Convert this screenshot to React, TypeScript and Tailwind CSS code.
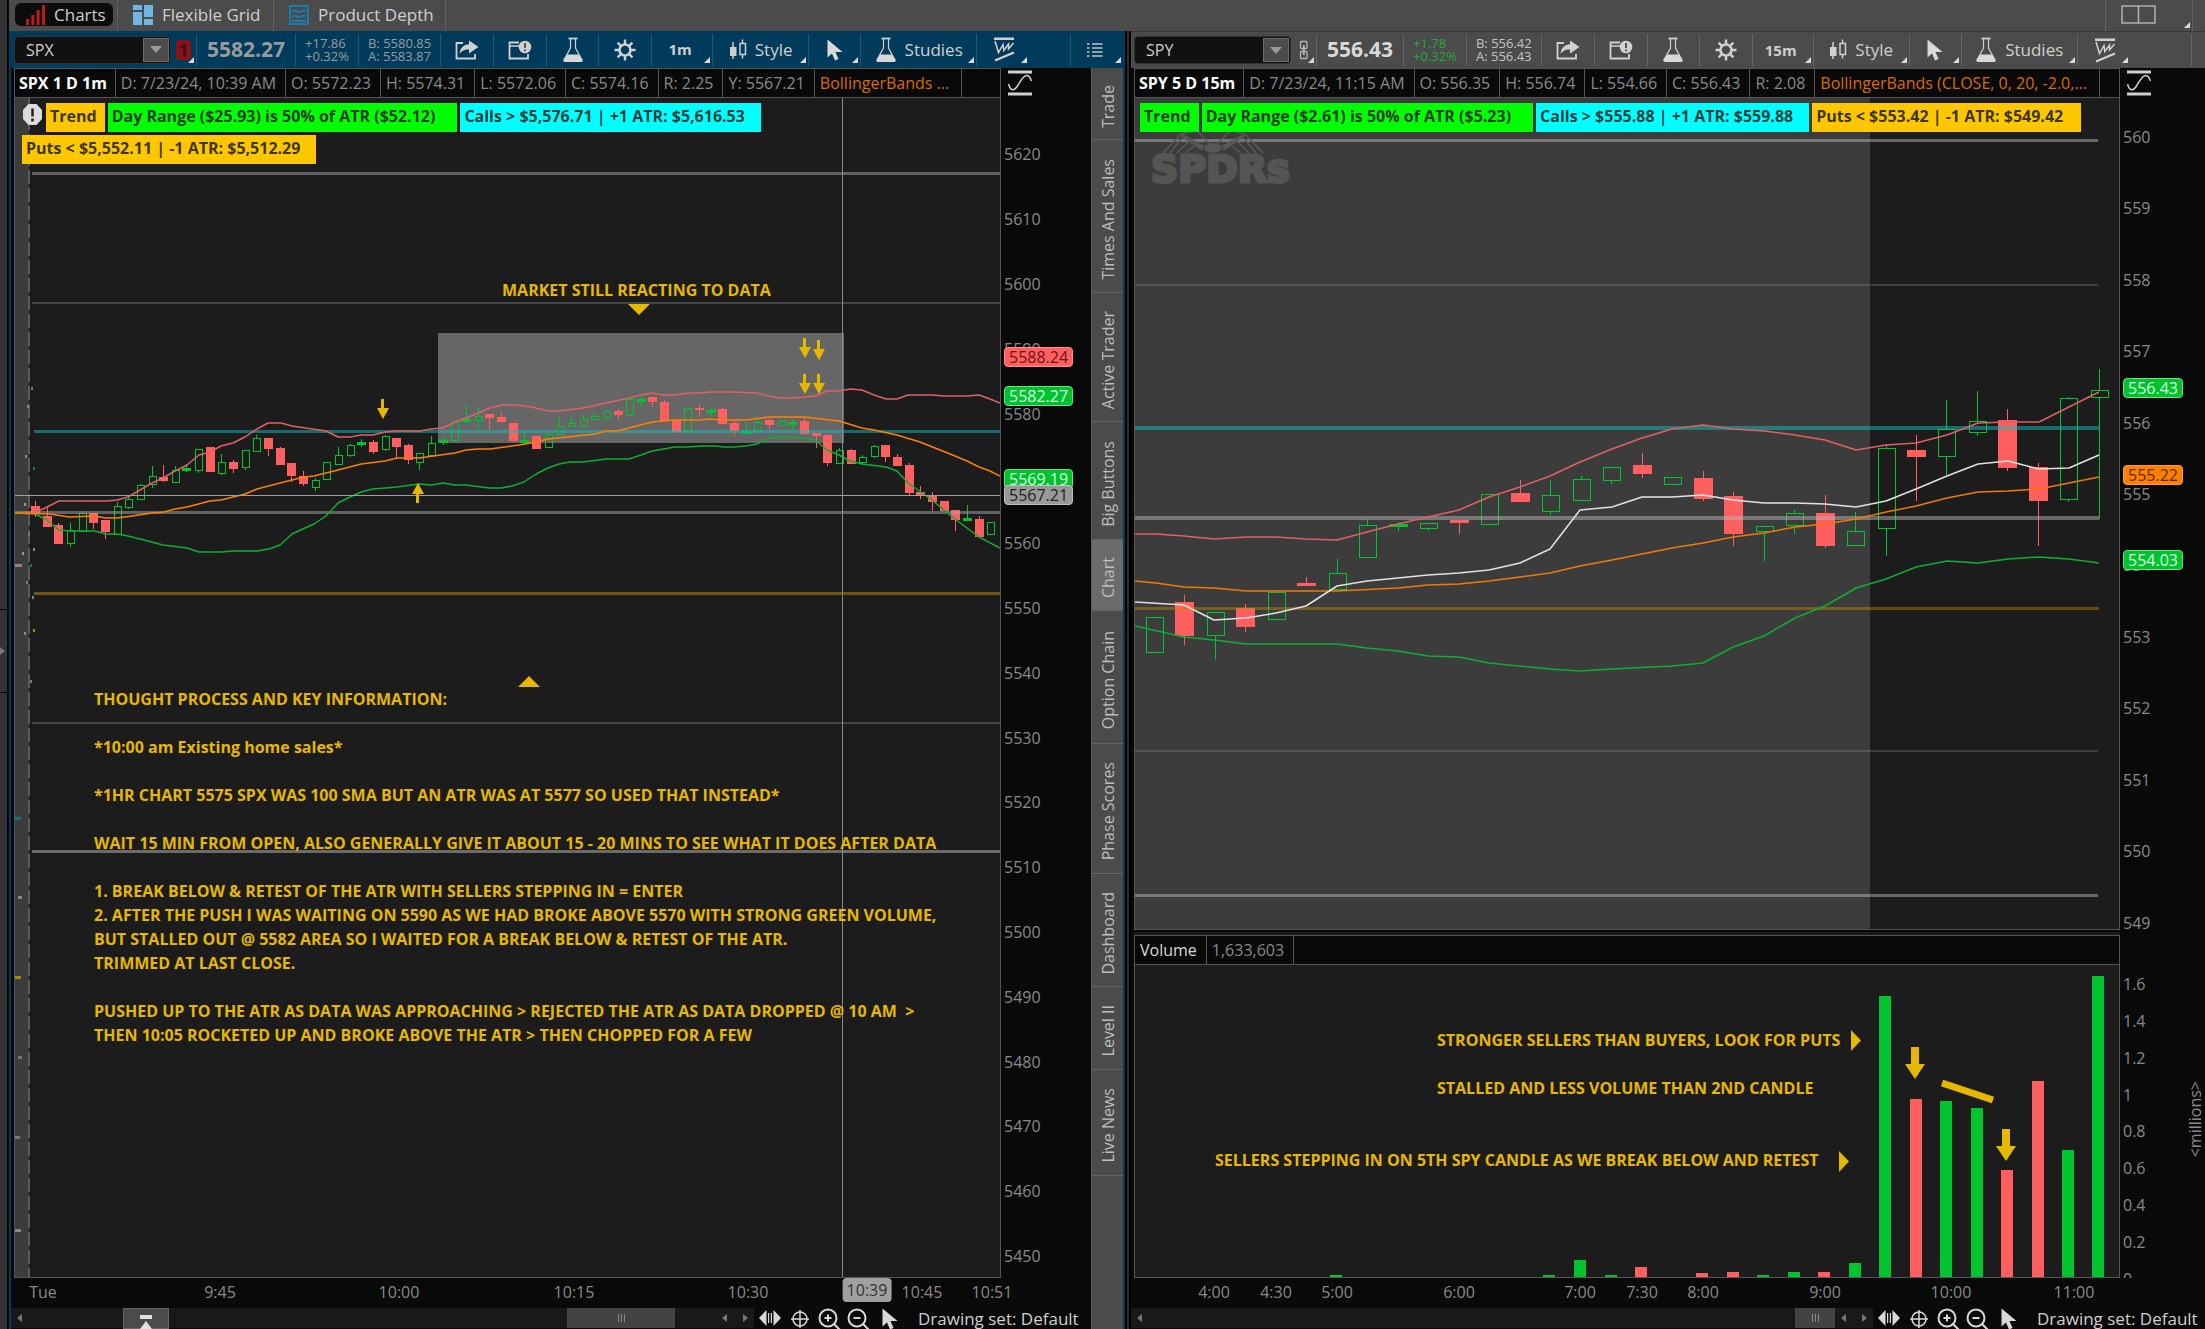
import React from 'react';

type Candle = [kind: 'u' | 'd', high: number, top: number, bottom: number, low: number];
type Point = [x: number, y: number];

const GREEN = '#00c52e';
const RED = '#ff5f5f';
const ORANGE = '#ff8000';
const GOLD = '#e6b800';

/* ---------- data: SPX 1 minute ---------- */

const spxCandles: Candle[] = [
  ['d', 501, 506, 513, 517], ['d', 507, 516, 527, 527], ['d', 523, 525, 544, 544], ['u', 523, 530, 543, 547],
  ['u', 511, 513, 531, 531], ['d', 513, 513, 523, 529], ['d', 520, 520, 532, 539], ['u', 502, 506, 534, 534],
  ['u', 497, 499, 507, 509], ['u', 484, 485, 499, 500], ['u', 466, 476, 484, 488], ['d', 465, 477, 481, 482],
  ['u', 466, 470, 482, 482], ['u', 464, 468, 470, 472], ['u', 449, 449, 470, 473], ['d', 447, 447, 472, 472],
  ['u', 454, 462, 473, 475], ['d', 460, 462, 469, 473], ['u', 450, 450, 467, 470], ['u', 435, 438, 451, 452],
  ['d', 438, 438, 449, 456], ['d', 447, 448, 465, 465], ['d', 463, 463, 476, 482], ['d', 471, 476, 484, 486],
  ['u', 478, 480, 487, 491], ['u', 462, 462, 479, 479], ['u', 447, 455, 464, 464], ['u', 444, 445, 455, 457],
  ['u', 439, 442, 444, 447], ['d', 440, 442, 452, 454], ['u', 435, 436, 449, 451], ['d', 438, 438, 447, 458],
  ['d', 444, 445, 460, 464], ['u', 453, 453, 462, 470], ['u', 436, 443, 455, 456], ['u', 437, 440, 442, 445],
  ['u', 421, 422, 440, 441], ['u', 404, 419, 421, 421], ['u', 408, 416, 420, 429], ['d', 414, 414, 418, 430],
  ['d', 412, 417, 422, 422], ['d', 423, 423, 441, 442], ['u', 432, 440, 442, 444], ['d', 436, 436, 449, 449],
  ['u', 432, 434, 447, 447], ['u', 417, 426, 434, 434], ['u', 415, 423, 426, 426], ['u', 414, 419, 426, 426],
  ['u', 412, 416, 419, 421], ['u', 410, 411, 417, 421], ['d', 409, 411, 415, 419], ['u', 398, 399, 415, 415],
  ['u', 396, 399, 401, 406], ['d', 397, 397, 402, 407], ['d', 400, 402, 421, 421], ['d', 419, 421, 432, 433],
  ['u', 407, 408, 431, 434], ['d', 405, 408, 410, 417], ['u', 408, 410, 412, 417], ['d', 408, 409, 424, 425],
  ['d', 421, 423, 431, 436], ['u', 422, 431, 433, 433], ['u', 415, 422, 431, 432], ['d', 419, 420, 425, 429],
  ['u', 420, 421, 425, 427], ['u', 420, 422, 424, 430], ['d', 418, 421, 434, 434], ['d', 433, 433, 436, 448],
  ['d', 434, 435, 463, 466], ['u', 448, 450, 463, 464], ['d', 449, 450, 464, 464], ['u', 455, 457, 462, 465],
  ['u', 445, 446, 456, 458], ['d', 445, 445, 457, 462], ['d', 454, 457, 466, 466], ['d', 463, 465, 493, 496],
  ['d', 486, 492, 496, 499], ['d', 492, 495, 502, 511], ['d', 501, 501, 511, 511], ['d', 510, 510, 520, 531],
  ['u', 505, 518, 520, 520], ['d', 516, 519, 537, 537], ['u', 522, 522, 534, 534],
];

const spxUpper: Point[] = [
  [15, 513], [35, 512], [43, 509], [59, 501], [107, 501], [117, 500], [128, 497], [140, 490], [152, 483], [163, 478],
  [175, 471], [187, 465], [199, 455], [210, 452], [221, 446], [233, 443], [245, 437], [257, 429], [268, 423], [281, 423],
  [292, 426], [326, 431], [338, 437], [350, 437], [361, 435], [373, 435], [385, 432], [397, 431], [420, 431], [431, 429],
  [443, 428], [455, 422], [466, 418], [478, 413], [490, 408], [502, 405], [516, 405], [525, 406], [536, 408], [548, 411],
  [559, 411], [583, 408], [606, 403], [629, 398], [641, 395], [652, 393], [663, 395], [675, 395], [689, 393], [699, 393],
  [710, 392], [734, 392], [757, 393], [769, 396], [780, 398], [792, 398], [804, 397], [815, 396], [827, 391], [839, 391],
  [850, 389], [862, 390], [874, 395], [886, 399], [897, 399], [908, 395], [932, 395], [944, 396], [967, 396], [979, 395],
  [990, 399], [1000, 403],
];
const spxMiddle: Point[] = [
  [15, 513], [50, 514], [69, 517], [94, 516], [106, 518], [117, 518], [132, 516], [152, 513], [164, 512], [175, 509],
  [187, 507], [210, 501], [221, 500], [245, 494], [257, 489], [280, 483], [304, 477], [314, 476], [338, 470], [361, 464],
  [385, 461], [397, 458], [419, 458], [455, 453], [466, 450], [478, 449], [490, 449], [519, 445], [536, 442], [548, 439],
  [595, 434], [606, 431], [617, 431], [629, 428], [652, 422], [675, 420], [699, 420], [710, 419], [722, 420], [746, 420],
  [769, 417], [804, 417], [839, 421], [862, 428], [874, 430], [897, 435], [920, 442], [955, 456], [967, 461], [979, 467],
  [990, 471], [1000, 476],
];
const spxLower: Point[] = [
  [15, 513], [35, 514], [47, 520], [59, 530], [70, 531], [95, 531], [106, 534], [117, 534], [128, 536], [140, 539],
  [163, 545], [187, 548], [199, 552], [221, 552], [233, 551], [257, 551], [269, 549], [280, 545], [292, 534], [314, 524],
  [326, 516], [338, 503], [350, 497], [361, 492], [373, 489], [397, 487], [419, 484], [431, 485], [443, 483], [455, 485],
  [466, 485], [489, 488], [501, 488], [512, 486], [524, 482], [536, 474], [548, 468], [559, 464], [570, 462], [583, 462],
  [606, 459], [629, 459], [641, 455], [652, 451], [675, 447], [687, 447], [703, 446], [715, 446], [724, 447], [734, 447],
  [746, 446], [757, 444], [769, 438], [780, 437], [792, 437], [804, 438], [815, 440], [827, 450], [839, 455], [850, 461],
  [862, 464], [886, 467], [897, 471], [908, 483], [932, 500], [955, 519], [979, 537], [1000, 548],
];

/* ---------- data: SPY 15 minute ---------- */

const spyCandles: Candle[] = [
  ['u', 617, 617, 652, 652], ['d', 595, 602, 636, 645], ['u', 612, 612, 635, 659], ['d', 604, 608, 627, 632],
  ['u', 590, 592, 619, 619], ['d', 577, 583, 586, 586], ['u', 559, 573, 589, 589], ['u', 519, 525, 557, 557],
  ['u', 522, 524, 526, 531], ['u', 523, 523, 528, 531], ['d', 520, 520, 523, 534], ['u', 494, 494, 524, 524],
  ['d', 480, 493, 502, 502], ['u', 480, 495, 511, 515], ['u', 476, 479, 500, 500], ['u', 467, 467, 480, 484],
  ['d', 453, 465, 474, 478], ['u', 477, 477, 484, 484], ['d', 471, 478, 499, 501], ['d', 492, 496, 534, 546],
  ['u', 526, 526, 531, 561], ['u', 510, 513, 525, 534], ['d', 495, 513, 546, 548], ['u', 512, 531, 545, 545],
  ['u', 445, 448, 528, 556], ['d', 435, 450, 457, 501], ['u', 400, 429, 456, 475], ['u', 391, 421, 432, 436],
  ['d', 409, 420, 468, 471], ['d', 463, 467, 501, 546], ['u', 397, 398, 499, 502], ['u', 369, 390, 397, 519],
];

const spyUpper: Point[] = [
  [1135, 534], [1156, 534], [1184, 536], [1214, 539], [1246, 537], [1276, 537], [1306, 539], [1337, 540], [1367, 532],
  [1398, 524], [1428, 517], [1459, 510], [1489, 497], [1520, 487], [1550, 476], [1580, 462], [1612, 449], [1642, 438],
  [1672, 429], [1703, 425], [1733, 429], [1764, 431], [1795, 435], [1825, 440], [1856, 450], [1886, 445], [1916, 443],
  [1947, 435], [1978, 423], [2008, 422], [2039, 422], [2069, 407], [2099, 392],
];
const spyMiddle: Point[] = [
  [1135, 581], [1156, 583], [1184, 587], [1214, 588], [1246, 591], [1337, 591], [1398, 588], [1428, 585], [1459, 584],
  [1489, 581], [1520, 577], [1550, 573], [1580, 566], [1612, 560], [1642, 554], [1672, 548], [1703, 543], [1733, 537],
  [1764, 533], [1795, 527], [1825, 524], [1856, 519], [1886, 512], [1916, 506], [1947, 498], [1978, 492], [2008, 491],
  [2039, 489], [2069, 483], [2099, 477],
];
const spyAverage: Point[] = [
  [1135, 602], [1184, 605], [1214, 620], [1246, 618], [1276, 613], [1306, 606], [1337, 586], [1367, 581], [1398, 578],
  [1428, 575], [1459, 573], [1489, 570], [1520, 563], [1550, 549], [1580, 510], [1612, 507], [1642, 497], [1672, 497],
  [1703, 495], [1733, 500], [1764, 503], [1795, 503], [1825, 504], [1856, 507], [1886, 501], [1916, 489], [1947, 476],
  [1978, 464], [2008, 461], [2039, 469], [2069, 468], [2099, 455],
];
const spyLower: Point[] = [
  [1135, 626], [1184, 637], [1214, 640], [1246, 644], [1337, 644], [1367, 648], [1398, 651], [1428, 656], [1459, 657],
  [1489, 663], [1550, 669], [1580, 671], [1612, 669], [1672, 666], [1703, 663], [1733, 647], [1764, 636], [1795, 618],
  [1825, 606], [1856, 588], [1886, 579], [1916, 567], [1947, 561], [1978, 563], [2008, 559], [2039, 557], [2069, 559],
  [2099, 563],
];

const volumeBars: [x: number, top: number, kind: 'u' | 'd'][] = [
  [1336, 1275, 'u'], [1549, 1275, 'u'], [1580, 1260, 'u'], [1611, 1275, 'u'], [1641, 1267, 'd'], [1702, 1273, 'd'],
  [1733, 1272, 'd'], [1763, 1275, 'u'], [1794, 1272, 'u'], [1824, 1272, 'd'], [1855, 1263, 'u'], [1885, 996, 'u'],
  [1916, 1099, 'd'], [1946, 1101, 'u'], [1977, 1108, 'u'], [2007, 1170, 'd'], [2038, 1081, 'd'], [2068, 1150, 'u'],
  [2098, 976, 'u'],
];

/* ---------- chart primitives ---------- */

function Candles({ data, x0, step, width }: { data: Candle[]; x0: number; step: number; width: number }) {
  return (
    <g shapeRendering="crispEdges">
      {data.map(([kind, high, top, bottom, low], i) => {
        const x = Math.round(x0 + i * step);
        const left = x - width / 2;
        if (kind === 'd') {
          return (
            <g key={i} fill={RED}>
              <rect x={x} y={high} width={1} height={low - high} />
              <rect x={left} y={top} width={width + 1} height={bottom - top} />
            </g>
          );
        }
        const thin = bottom - top <= 2;
        return (
          <g key={i} fill={GREEN}>
            <rect x={x} y={high} width={1} height={Math.max(0, top - high)} />
            <rect x={x} y={bottom} width={1} height={Math.max(0, low - bottom)} />
            {thin ? (
              <rect x={left} y={top} width={width + 1} height={3} />
            ) : (
              <rect x={left + 1} y={top} width={width - 1} height={bottom - top} fill="none" stroke={GREEN} />
            )}
          </g>
        );
      })}
    </g>
  );
}

function Line({ points, color }: { points: Point[]; color: string }) {
  return (
    <polyline
      points={points.map((p) => p.join(',')).join(' ')}
      fill="none"
      stroke={color}
      strokeWidth={1.5}
      strokeLinejoin="round"
    />
  );
}

function Level({ x1, x2, y, h, color }: { x1: number; x2: number; y: number; h: number; color: string }) {
  return <rect x={x1} y={y} width={x2 - x1} height={h} fill={color} shapeRendering="crispEdges" />;
}

function ArrowMark({ x, y, up, big }: { x: number; y: number; up?: boolean; big?: boolean }) {
  const d = big ? 'M-4 0h8v17h6L0 32-10 17h6z' : 'M-2 0h3v9h5L0 20-6 9h4z';
  return <path d={d} transform={`translate(${x} ${y})${up ? ' scale(1 -1)' : ''}`} fill={GOLD} />;
}

/* ---------- icons ---------- */

const ShareIcon = () => (
  <svg width="24" height="20" viewBox="0 0 24 20" fill="none">
    <path d="M8 3H1.5v15.500H20V14" stroke="#d0d0d0" strokeWidth="1.800" />
    <path d="M14 0.500 23.500 7 14 13.500V9.500C9.500 9 7 10.500 4.500 14 5 8 8.500 4.500 14 4.200z" fill="#d0d0d0" />
  </svg>
);
const AlertWindowIcon = () => (
  <svg width="24" height="20" viewBox="0 0 24 20" fill="none">
    <path d="M11 2.500H1.500v16H20V14" stroke="#d0d0d0" strokeWidth="1.800" />
    <path d="M2 6h9" stroke="#d0d0d0" strokeWidth="1.500" />
    <circle cx="17" cy="7" r="6.300" fill="#d0d0d0" />
    <path d="M17 3v5M17 9.500v1.800" stroke="#3d4d57" strokeWidth="1.800" />
  </svg>
);
const FlaskIcon = () => (
  <svg width="22" height="26" viewBox="0 0 22 26" fill="none">
    <path d="M6.500 1.500h9" stroke="#d0d0d0" strokeWidth="1.800" />
    <path d="M8.500 2v9L2 23h18l-6.500-12V2" stroke="#d0d0d0" strokeWidth="1.200" />
    <path d="M5.500 17.500h11L20.500 23q.5 2-1.500 2H3q-2 0-1.500-2z" fill="#d9d9d9" />
  </svg>
);
const GearIcon = () => (
  <svg width="22" height="22" viewBox="0 0 22 22" fill="none">
    <circle cx="11" cy="11" r="5.500" stroke="#d0d0d0" strokeWidth="2.600" />
    <path
      d="M11 0.500v5M11 16.500v5M.5 11h5M16.500 11h5M3.600 3.600l3.500 3.500M14.900 14.900l3.500 3.500M3.600 18.400l3.500-3.500M14.900 7.100l3.500-3.500"
      stroke="#d0d0d0"
      strokeWidth="2.400"
    />
  </svg>
);
const CandlesIcon = () => (
  <svg width="18" height="22" viewBox="0 0 18 22" fill="none" stroke="#d0d0d0">
    <path d="M4 3v17" strokeWidth="1.500" />
    <rect x="1" y="8" width="6.500" height="9" fill="#d0d0d0" stroke="none" />
    <path d="M13.500 0.500v4M13.500 15.500v4" strokeWidth="1.500" />
    <rect x="11" y="4.500" width="5.500" height="11" strokeWidth="1.500" />
  </svg>
);
const CursorIcon = () => (
  <svg width="16" height="22" viewBox="0 0 16 22" fill="#d9d9d9">
    <path d="M.5.500v18l4.500-4 3 7 3.500-1.500-3-7h7z" />
  </svg>
);
const PatternIcon = () => (
  <svg width="22" height="25" viewBox="0 0 22 25" fill="none" stroke="#d0d0d0">
    <path d="M1 1.800h20M2 23.500 21 15.500" strokeWidth="2.400" />
    <path d="M2 4l3.500 11.500L10 7.500l.8 6L15.500 7v5L20.500 6" strokeWidth="1.500" />
  </svg>
);
const ListIcon = () => (
  <svg width="16" height="16" viewBox="0 0 16 16" stroke="#c4c4c4" strokeWidth="1.500">
    <path d="M0 2h2.500M0 6h2.500M0 10h2.500M0 14h2.500M5 2h10.500M5 6h10.500M5 10h10.500M5 14h10.500" />
  </svg>
);
const LinkIcon = () => (
  <svg width="10" height="20" viewBox="0 0 10 20" fill="none" stroke="#b5b5b5" strokeWidth="1.300">
    <rect x="1.500" y="1.500" width="6.500" height="7" rx="1" />
    <rect x="1.500" y="11.500" width="6.500" height="7" rx="1" />
    <path d="M4.800 5v10" strokeWidth="1.800" />
  </svg>
);
const ScaleIcon = () => (
  <svg width="24" height="26" viewBox="0 0 24 26" fill="none" stroke="#d0d0d0">
    <path d="M0 2h24M0 24h24" strokeWidth="3" />
    <path d="M.5 14c2 7.500 6 7 9 2 3-5 6-11 9.500-10.500C22 6 22.500 8 23.500 11" strokeWidth="1.500" />
  </svg>
);
const DoubleArrowIcon = () => (
  <svg width="22" height="16" viewBox="0 0 22 16" fill="#d9d9d9">
    <path d="M7.500 0v16L0 8zM14.500 0v16L22 8zM9 3h1.200v10H9zM11.800 3H13v10h-1.200z" />
  </svg>
);
const CrosshairIcon = () => (
  <svg width="18" height="18" viewBox="0 0 18 18" fill="none" stroke="#d9d9d9" strokeWidth="1.500">
    <circle cx="9" cy="9" r="7" />
    <path d="M9 0v18M0 9h18" />
  </svg>
);
const ZoomIcon = ({ plus }: { plus?: boolean }) => (
  <svg width="24" height="22" viewBox="0 0 24 22" fill="none" stroke="#d9d9d9" strokeWidth="2">
    <circle cx="10" cy="10" r="8.500" />
    <path d="M16 16l6 6M6.500 10h7" />
    {plus && <path d="M10 6.500v7" />}
  </svg>
);

/* ---------- shared chrome ---------- */

const Corner = () => (
  <svg className="absolute right-0.5 bottom-[3px]" width="6" height="6" viewBox="0 0 6 6">
    <path d="M6 0v6H0z" fill="#d9d9d9" />
  </svg>
);

function ToolButton({
  label,
  className,
  corner,
  children,
}: {
  label: string;
  className: string;
  corner?: boolean;
  children: React.ReactNode;
}) {
  return (
    <button
      type="button"
      aria-label={label}
      className={`relative flex h-8 shrink-0 items-center justify-center border-r border-white/15 text-[17px] text-[#cfcfcf] ${className}`}
    >
      {children}
      {corner && <Corner />}
    </button>
  );
}

type Quote = { symbol: string; last: string; change: string; percent: string; bid: string; ask: string; interval: string };

function Toolbar({ quote, active }: { quote: Quote; active?: boolean }) {
  return (
    <div
      className={`flex h-[37px] shrink-0 items-center overflow-hidden ${
        active ? 'bg-[#003b5c] pl-[3px]' : 'border-t border-[#383838] bg-[#4b4b4b] pl-[3px]'
      }`}
    >
      <div className="flex h-7 w-[157px] shrink-0 items-center rounded-sm border border-[#333] bg-[#111] p-px">
        <input
          aria-label="Symbol"
          defaultValue={quote.symbol}
          className="h-full w-full min-w-0 bg-transparent pl-2.5 text-base text-[#cfcfcf] outline-none"
        />
        <button
          type="button"
          aria-label="Choose symbol"
          className="flex h-6 w-[26px] shrink-0 items-center justify-center border border-[#6a6a6a] bg-[#4b4b4b]"
        >
          <svg width="12" height="7" viewBox="0 0 12 7">
            <path d="M0 0h12L6 7z" fill="#9a9a9a" />
          </svg>
        </button>
      </div>
      <ToolButton label="Link color" className="w-[26px]" corner>
        {active ? (
          <span className="flex h-5 w-[15px] items-center justify-center rounded-sm bg-[#8f1212] text-lg font-bold text-[#3a1020]">
            1
          </span>
        ) : (
          <LinkIcon />
        )}
      </ToolButton>
      <div
        className={`flex h-8 shrink-0 items-center border-r border-white/15 px-2.5 text-[21px] font-bold ${
          active ? 'text-[#9a9a9a]' : 'text-[#d9d9d9]'
        }`}
      >
        {quote.last}
      </div>
      <div
        className={`flex h-8 shrink-0 flex-col justify-center border-r border-white/15 px-[9px] text-[13px] leading-[13px] ${
          active ? 'text-[#9a9a9a]' : 'text-[#23a83c]'
        }`}
      >
        <span>{quote.change}</span>
        <span>{quote.percent}</span>
      </div>
      <div
        className={`flex h-8 shrink-0 flex-col justify-center border-r border-white/15 px-[9px] text-[13px] leading-[13px] ${
          active ? 'text-[#9a9a9a]' : 'text-[#c4c4c4]'
        }`}
      >
        <span>B: {quote.bid}</span>
        <span>A: {quote.ask}</span>
      </div>
      <ToolButton label="Share" className="w-[53px]"><ShareIcon /></ToolButton>
      <ToolButton label="Create alert" className="w-[53px]"><AlertWindowIcon /></ToolButton>
      <ToolButton label="Quick study" className="w-[52px]"><FlaskIcon /></ToolButton>
      <ToolButton label="Chart settings" className="w-[53px]"><GearIcon /></ToolButton>
      <ToolButton label="Time frame" className="w-[61px]" corner>
        <span className="pr-1 text-[15px] font-bold">{quote.interval}</span>
      </ToolButton>
      <ToolButton label="Style" className="w-24 gap-2" corner><CandlesIcon /><span>Style</span></ToolButton>
      <ToolButton label="Cursor" className="w-[52px]" corner><CursorIcon /></ToolButton>
      <ToolButton label="Studies" className="w-[116px] gap-2" corner><FlaskIcon /><span>Studies</span></ToolButton>
      <div className="relative flex h-8 w-[52px] shrink-0 items-center pl-4">
        <PatternIcon />
        <Corner />
      </div>
      <div className="h-8 flex-1" />
      {active ? (
        <div className="relative flex h-8 w-[53px] shrink-0 items-center justify-center border-l border-white/15 pr-1">
          <ListIcon />
          <Corner />
        </div>
      ) : (
        <div className="h-8 w-3.5 shrink-0 border-l border-white/15" />
      )}
    </div>
  );
}

function DataRow({ title, cells, study }: { title: string; cells: string[]; study: string }) {
  return (
    <div className="flex h-[30px] shrink-0 items-stretch overflow-hidden border border-[#555] bg-[#090909] text-base leading-7 whitespace-nowrap text-[#8a8a8a]">
      <div className="shrink-0 border-r border-[#555] pr-2 pl-1 font-bold text-white">{title}</div>
      {cells.map((c) => (
        <div key={c} className="shrink-0 border-r border-[#555] pr-[9px] pl-[5px]">
          {c}
        </div>
      ))}
      <div className="shrink-0 border-r border-[#555] pr-3 pl-[5px] text-[#db6c00]">{study}</div>
    </div>
  );
}

function Label({ color, pad, children }: { color: string; pad: string; children: React.ReactNode }) {
  return (
    <span className={`h-[29px] pl-1 text-base leading-[27px] font-bold text-[#222]/90 ${pad} ${color}`}>{children}</span>
  );
}

type Tag = { text: string; at: number; tone: string };

function PriceScale({ labels, tags, top, span }: { labels: string[]; tags: Tag[]; top: number; span: number }) {
  const place = (v: number) => ({ top: `${((top - v) / span) * 100}%` });
  return (
    <div className="relative flex-1 overflow-hidden text-base text-[#8a8a8a]">
      {labels.map((l) => (
        <span key={l} className="absolute left-[3px] -translate-y-1/2" style={place(Number(l))}>
          {l}
        </span>
      ))}
      {tags.map((t) => (
        <span
          key={t.text}
          className={`absolute left-[3px] h-5 -translate-y-1/2 rounded border px-1 leading-[18px] ${t.tone}`}
          style={place(t.at)}
        >
          {t.text}
        </span>
      ))}
    </div>
  );
}

function TimeScale({ ticks, width }: { ticks: [string, number][]; width: number }) {
  return (
    <div className="relative h-[30px] shrink-0 text-base leading-[28px] text-[#8a8a8a]">
      {ticks.map(([t, x]) => (
        <span
          key={t}
          className={`absolute -translate-x-1/2 ${
            t === '10:39' ? 'top-0 h-6 rounded bg-[#a0a0a0] px-1 leading-6 text-[#333]' : 'top-0'
          }`}
          style={{ left: `${(x / width) * 100}%` }}
        >
          {t}
        </span>
      ))}
    </div>
  );
}

function FooterBar({ gadget, thumb, end }: { gadget?: boolean; thumb: string; end: string }) {
  return (
    <div className="flex h-[21px] shrink-0 items-start overflow-hidden bg-[#090909]">
      <div className="relative flex h-5 flex-1 items-center bg-[#191919] px-1.5 text-[#777]">
        <svg width="5" height="8" viewBox="0 0 5 8" fill="#777"><path d="M5 0v8L0 4z" /></svg>
        {gadget && (
          <button
            type="button"
            aria-label="Expand panel"
            className="absolute top-0 left-[112px] flex h-[21px] w-[46px] justify-center border border-[#666] bg-[#4b4b4b] pt-1.5"
          >
            <svg width="12" height="14" viewBox="0 0 12 14" fill="#e0e0e0"><path d="M0 0h12v4H0zM6 6l6 8H0z" /></svg>
          </button>
        )}
        <div className="flex-1" />
        <div className={`flex h-5 items-center justify-center gap-0.5 bg-[#434343] ${thumb}`}>
          <i className="h-2 w-px bg-[#888]" />
          <i className="h-2 w-px bg-[#888]" />
          <i className="h-2 w-px bg-[#888]" />
        </div>
        <svg width="26" height="8" viewBox="0 0 26 8" fill="#777"><path d="M5 0v8L0 4zM21 0v8l5-4z" /></svg>
      </div>
      <div className={`flex h-[21px] shrink-0 items-start pl-[5px] ${end}`}>
        <button type="button" aria-label="Pan" className="mt-0.5 w-8"><DoubleArrowIcon /></button>
        <button type="button" aria-label="Crosshair" className="mt-0.5 w-[27px]"><CrosshairIcon /></button>
        <button type="button" aria-label="Zoom in" className="w-[29px]"><ZoomIcon plus /></button>
        <button type="button" aria-label="Zoom out" className="w-[35px]"><ZoomIcon /></button>
        <button type="button" aria-label="Pointer" className="w-9"><CursorIcon /></button>
        <button type="button" className="text-[17px] leading-[22px] whitespace-nowrap text-[#cfcfcf]">
          Drawing set: Default
        </button>
      </div>
    </div>
  );
}

/* ---------- left panel ---------- */

const notes = `THOUGHT PROCESS AND KEY INFORMATION:

*10:00 am Existing home sales*

*1HR CHART 5575 SPX WAS 100 SMA BUT AN ATR WAS AT 5577 SO USED THAT INSTEAD*

WAIT 15 MIN FROM OPEN, ALSO GENERALLY GIVE IT ABOUT 15 - 20 MINS TO SEE WHAT IT DOES AFTER DATA

1. BREAK BELOW & RETEST OF THE ATR WITH SELLERS STEPPING IN = ENTER
2. AFTER THE PUSH I WAS WAITING ON 5590 AS WE HAD BROKE ABOVE 5570 WITH STRONG GREEN VOLUME,
BUT STALLED OUT @ 5582 AREA SO I WAITED FOR A BREAK BELOW & RETEST OF THE ATR.
TRIMMED AT LAST CLOSE.

PUSHED UP TO THE ATR AS DATA WAS APPROACHING > REJECTED THE ATR AS DATA DROPPED @ 10 AM  >
THEN 10:05 ROCKETED UP AND BROKE ABOVE THE ATR > THEN CHOPPED FOR A FEW`;

const edgeTicks: [number, number, number, string][] = [
  [31, 387, 2, '#777'], [27, 405, 2, '#888'], [25, 455, 2, '#888'], [33, 467, 2, '#177'], [24, 503, 2, '#999'],
  [28, 533, 2, '#777'], [33, 548, 2, '#888'], [22, 552, 2, '#999'], [15, 564, 7, '#888'], [30, 564, 2, '#177'],
  [26, 581, 2, '#777'], [32, 596, 2, '#888'], [28, 612, 2, '#177'], [24, 632, 2, '#888'], [33, 629, 2, '#a80'],
  [30, 680, 2, '#777'], [15, 817, 6, '#177'], [18, 896, 4, '#888'], [15, 976, 6, '#a80'], [18, 1056, 4, '#777'],
  [15, 1136, 5, '#777'], [15, 1229, 6, '#888'],
];

function SpxPane() {
  return (
    <div className="relative min-h-0 flex-1 overflow-hidden border border-t-0 border-[#555] bg-[#1c1c1c]">
      <svg className="absolute inset-0 h-full w-full" viewBox="15 98 985 1179" preserveAspectRatio="none">
        <rect x="15" y="98" width="14" height="1179" fill="#3c3c3c" />
        <line x1="29" x2="29" y1="98" y2="1277" stroke="#5a5a5a" strokeWidth="2" strokeDasharray="14 4" />
        {edgeTicks.map(([x, y, w, c]) => (
          <rect key={`${x}-${y}`} x={x} y={y} width={w} height={3} fill={c} />
        ))}
        <rect x="438" y="333" width="406" height="110" fill="#666" />
        <Candles data={spxCandles} x0={35} step={11.65} width={8} />
        <Level x1={32} x2={1000} y={172} h={3} color="#8a8a8aa0" />
        <Level x1={32} x2={1000} y={302} h={2} color="#8a8a8a60" />
        <Level x1={34} x2={1000} y={430} h={3} color="#12bcbc80" />
        <Level x1={15} x2={1000} y={511} h={3} color="#a8a8a880" />
        <Level x1={34} x2={1000} y={592} h={3} color="#c0900080" />
        <Level x1={32} x2={1000} y={722} h={2} color="#8a8a8a60" />
        <Level x1={32} x2={1000} y={850} h={3} color="#a8a8a890" />
        <Line points={spxUpper} color="#e06066" />
        <Line points={spxLower} color="#0fae32" />
        <Line points={spxMiddle} color={ORANGE} />
        <Level x1={15} x2={1000} y={495} h={1} color="#a0a0a0" />
        <Level x1={842} x2={843} y={98} h={1179} color="#8a8a8a" />
        <ArrowMark x={383} y={399} />
        <ArrowMark x={418} y={503} up />
        <ArrowMark x={805} y={338} />
        <ArrowMark x={819} y={340} />
        <ArrowMark x={805} y={374} />
        <ArrowMark x={819} y={374} />
        <path d="M628 304h22l-11 11z M518 687h22l-11-11z" fill={GOLD} />
      </svg>
      <div className="absolute top-[5px] left-[7px] flex max-w-[760px] flex-wrap gap-x-[3px] gap-y-[3px]">
        <svg width="21" height="24" viewBox="0 0 21 24">
          <path d="M6.500 1h8L20 7v9l-5.500 6h-8L1 16V7z" fill="#dcdcdc" />
          <path d="M10.500 5.500v8M10.500 15.500v3" stroke="#222" strokeWidth="2.500" />
        </svg>
        <Label color="bg-[#ffc700]" pad="pr-2">Trend</Label>
        <Label color="bg-[#00ff00]" pad="pr-[22px]">Day Range ($25.93) is 50% of ATR ($52.12)</Label>
        <Label color="bg-[#00ffff]" pad="pr-4">Calls &gt; $5,576.71 | +1 ATR: $5,616.53</Label>
        <Label color="bg-[#ffc700]" pad="pr-4">Puts &lt; $5,552.11 | -1 ATR: $5,512.29</Label>
      </div>
      <p className="absolute top-[180px] left-[487px] text-base leading-6 font-bold whitespace-nowrap text-[#e6b800]">
        MARKET STILL REACTING TO DATA
      </p>
      <p className="absolute top-[589px] left-[79px] text-base leading-6 font-bold whitespace-pre text-[#e6b800]">{notes}</p>
    </div>
  );
}

const gadgets: [string, string][] = [
  ['Trade', 'h-[72px]'], ['Times And Sales', 'h-[153px]'], ['Active Trader', 'h-[129px]'], ['Big Buttons', 'h-[118px]'],
  ['Chart', 'h-[71px]'], ['Option Chain', 'h-[133px]'], ['Phase Scores', 'h-[130px]'], ['Dashboard', 'h-[113px]'],
  ['Level II', 'h-[83px]'], ['Live News', 'h-[106px]'],
];

function GadgetBar() {
  return (
    <nav className="flex w-8 shrink-0 flex-col overflow-hidden border-l border-[#5c5c5c] bg-[#4b4b4b]">
      {gadgets.map(([name, size]) => (
        <button
          type="button"
          key={name}
          className={`flex shrink-0 items-center justify-center border-b border-[#636363] pt-1.5 text-base text-[#bdbdbd] ${
            name === 'Chart' ? 'bg-[#6b6b6b]' : ''
          } ${size}`}
        >
          <span className="rotate-180 whitespace-nowrap [writing-mode:vertical-rl]">{name}</span>
        </button>
      ))}
    </nav>
  );
}

const GREEN_TAG = 'border-[#6fe08a] bg-[#00c22d] text-[#dcffe0]';

function LeftPanel() {
  return (
    <section className="flex min-w-0 flex-[1112] flex-col border-x-2 border-[#003b5c]">
      <Toolbar
        active
        quote={{
          symbol: 'SPX', last: '5582.27', change: '+17.86', percent: '+0.32%', bid: '5580.85', ask: '5583.87', interval: '1m',
        }}
      />
      <div className="flex min-h-0 flex-1 bg-[#090909]">
        <div className="flex min-w-0 flex-1 flex-col">
          <div className="flex min-h-0 flex-1 pl-[3px]">
            <div className="flex min-w-0 flex-1 flex-col">
              <DataRow
                title="SPX 1 D 1m"
                cells={['D: 7/23/24, 10:39 AM', 'O: 5572.23', 'H: 5574.31', 'L: 5572.06', 'C: 5574.16', 'R: 2.25', 'Y: 5567.21']}
                study="BollingerBands ..."
              />
              <SpxPane />
            </div>
            <div className="flex w-[90px] shrink-0 flex-col">
              <div className="h-[30px] pt-0.5 pl-[7px]"><ScaleIcon /></div>
              <PriceScale
                top={5628.7}
                span={182.1}
                labels={[
                  '5620', '5610', '5600', '5590', '5580', '5560', '5550', '5540', '5530', '5520', '5510', '5500', '5490',
                  '5480', '5470', '5460', '5450',
                ]}
                tags={[
                  { text: '5588.24', at: 5588.7, tone: 'border-[#ff8d8d] bg-[#ff5f5f] text-[#6b1515]' },
                  { text: '5582.27', at: 5582.7, tone: GREEN_TAG },
                  { text: '5569.19', at: 5569.9, tone: GREEN_TAG },
                  { text: '5567.21', at: 5567.5, tone: 'border-[#c0c0c0] bg-[#999] text-[#222]' },
                ]}
              />
            </div>
          </div>
          <TimeScale
            width={1080}
            ticks={[
              ['Tue', 32], ['9:45', 209], ['10:00', 388], ['10:15', 563], ['10:30', 737], ['10:39', 856], ['10:45', 911],
              ['10:51', 981],
            ]}
          />
          <FooterBar gadget thumb="mr-[47px] w-[108px]" end="w-[337px]" />
        </div>
        <GadgetBar />
      </div>
    </section>
  );
}

/* ---------- right panel ---------- */

function SpyPane() {
  return (
    <div className="relative min-h-0 flex-1 overflow-hidden border border-t-0 border-[#555] bg-[#1c1c1c]">
      <svg className="absolute inset-0 h-full w-full" viewBox="1135 98 984 831" preserveAspectRatio="none">
        <rect x="1135" y="98" width="735" height="831" fill="#3c3c3c" />
        <Candles data={spyCandles} x0={1154} step={30.48} width={18} />
        <Level x1={1135} x2={2098} y={139} h={3} color="#b4b4b480" />
        <Level x1={1135} x2={2098} y={284} h={2} color="#8a8a8a50" />
        <Level x1={1135} x2={2099} y={426} h={4} color="#12bcbc80" />
        <Level x1={1135} x2={2099} y={516} h={4} color="#b4b4b480" />
        <Level x1={1135} x2={2099} y={607} h={3} color="#c0900070" />
        <Level x1={1135} x2={2098} y={750} h={2} color="#8a8a8a50" />
        <Level x1={1135} x2={2098} y={894} h={3} color="#b4b4b480" />
        <Line points={spyUpper} color="#e06066" />
        <Line points={spyLower} color="#0fae32" />
        <Line points={spyMiddle} color="#ef7a08" />
        <Line points={spyAverage} color="#e2e2e2" />
      </svg>
      <div className="absolute top-[31px] left-4 text-[#555]">
        <svg className="absolute top-0 left-3" width="104" height="26" viewBox="0 0 104 26" fill="none" stroke="#585858" strokeWidth="1.500">
          <path d="M0 24 18 5l24 13M7 24 20 8l20 11M14 24 26 12l14 9M22 24l9-7M36 1 18 5" />
          <path d="M100 24 82 5 58 18M93 24 80 8 60 19M86 24 74 12l-14 9M78 24l-9-7M66 1l16 4M34 1l14 16M68 1 52 17" />
          <ellipse cx="50" cy="19" rx="8" ry="4" fill="#585858" />
        </svg>
        <span className="block pt-5 font-['DejaVu_Sans'] text-[38px] leading-10 font-bold [-webkit-text-stroke:3px_#555]">SPDRs</span>
      </div>
      <div className="absolute top-[5px] left-[5px] flex gap-[3px] whitespace-nowrap">
        <Label color="bg-[#00ff00]" pad="pr-2">Trend</Label>
        <Label color="bg-[#00ff00]" pad="pr-[22px]">Day Range ($2.61) is 50% of ATR ($5.23)</Label>
        <Label color="bg-[#00ffff]" pad="pr-4">Calls &gt; $555.88 | +1 ATR: $559.88</Label>
        <Label color="bg-[#ffc700]" pad="pr-[18px]">Puts &lt; $553.42 | -1 ATR: $549.42</Label>
      </div>
    </div>
  );
}

function VolumePane() {
  return (
    <div className="relative min-h-0 flex-1 overflow-hidden border border-t-0 border-[#555] bg-[#1c1c1c]">
      <svg className="absolute inset-0 h-full w-full" viewBox="1135 965 984 312" preserveAspectRatio="none">
        {volumeBars.map(([x, top, kind]) => (
          <rect
            key={x}
            x={x - 6}
            y={top}
            width={12}
            height={1277 - top}
            fill={kind === 'u' ? GREEN : RED}
            shapeRendering="crispEdges"
          />
        ))}
        <ArrowMark x={1915} y={1047} big />
        <ArrowMark x={2006} y={1129} big />
        <path d="M1942 1083 1993 1100" stroke={GOLD} strokeWidth="7" />
        <path d="M1851 1030v21l10-10.500zM1839 1151v21l10-10.500z" fill={GOLD} />
      </svg>
      <p className="absolute top-[63px] left-[302px] text-base leading-6 font-bold whitespace-nowrap text-[#e6b800]">
        STRONGER SELLERS THAN BUYERS, LOOK FOR PUTS
      </p>
      <p className="absolute top-[111px] left-[302px] text-base leading-6 font-bold whitespace-nowrap text-[#e6b800]">
        STALLED AND LESS VOLUME THAN 2ND CANDLE
      </p>
      <p className="absolute top-[183px] left-20 text-base leading-6 font-bold whitespace-nowrap text-[#e6b800]">
        SELLERS STEPPING IN ON 5TH SPY CANDLE AS WE BREAK BELOW AND RETEST
      </p>
    </div>
  );
}

function RightPanel() {
  return (
    <section className="flex min-w-0 flex-[1074] flex-col bg-[#090909]">
      <Toolbar
        quote={{
          symbol: 'SPY', last: '556.43', change: '+1.78', percent: '+0.32%', bid: '556.42', ask: '556.43', interval: '15m',
        }}
      />
      <div className="flex min-h-0 flex-1 pl-[3px]">
        <div className="flex min-w-0 flex-1 flex-col">
          <DataRow
            title="SPY 5 D 15m"
            cells={['D: 7/23/24, 11:15 AM', 'O: 556.35', 'H: 556.74', 'L: 554.66', 'C: 556.43', 'R: 2.08']}
            study="BollingerBands (CLOSE, 0, 20, -2.0,..."
          />
          <SpyPane />
        </div>
        <div className="flex w-[85px] shrink-0 flex-col">
          <div className="h-[30px] pt-0.5 pl-[7px]"><ScaleIcon /></div>
          <PriceScale
            top={560.54}
            span={11.64}
            labels={['560', '559', '558', '557', '556', '555', '554', '553', '552', '551', '550', '549']}
            tags={[
              { text: '556.43', at: 556.48, tone: GREEN_TAG },
              { text: '555.22', at: 555.26, tone: 'border-[#ff9a38] bg-[#ff7f00] text-[#5a2c00]' },
              { text: '554.03', at: 554.07, tone: GREEN_TAG },
            ]}
          />
        </div>
      </div>
      <div className="mt-0.5 mr-[85px] ml-[3px] h-[3px] shrink-0 bg-[#1a1a1a]" />
      <div className="flex h-[343px] shrink-0 pl-[3px]">
        <div className="flex min-w-0 flex-1 flex-col">
          <div className="flex h-[30px] shrink-0 border border-[#555] text-base leading-7 text-[#8a8a8a]">
            <div className="border-r border-[#555] pr-[9px] pl-[5px] text-[#d9d9d9]">Volume</div>
            <div className="border-r border-[#555] pr-[9px] pl-[5px]">1,633,603</div>
          </div>
          <VolumePane />
        </div>
        <div className="relative flex w-[85px] shrink-0 flex-col">
          <PriceScale
            top={1.866}
            span={1.861}
            labels={['1.6', '1.4', '1.2', '1', '0.8', '0.6', '0.4', '0.2', '0']}
            tags={[]}
          />
          <span className="absolute top-[146px] right-0.5 rotate-180 text-base leading-4 text-[#8a8a8a] [writing-mode:vertical-rl]">
            &lt;millions&gt;
          </span>
        </div>
      </div>
      <TimeScale
        width={1074}
        ticks={[
          ['4:00', 83], ['4:30', 145], ['5:00', 206], ['6:00', 328], ['7:00', 449], ['7:30', 511], ['8:00', 572],
          ['9:00', 694], ['10:00', 820], ['11:00', 943],
        ]}
      />
      <FooterBar thumb="mr-[6px] w-10" end="w-[332px]" />
    </section>
  );
}

/* ---------- top bar ---------- */

function TopTabs() {
  return (
    <header className="flex h-[31px] shrink-0 items-stretch bg-[#4b4b4b] text-[17px] text-[#cfcfcf]">
      <div className="flex w-[109px] items-center border-r border-[#606060] pb-0.5 pl-1.5">
        <button type="button" className="flex h-[23px] w-[98px] items-center gap-[9px] rounded-md bg-[#0c0c0c] pl-[11px]">
          <svg width="19" height="20" viewBox="0 0 19 20" fill="#b81c1c">
            <path d="M0 14h3v6H0zM5.300 10h3v10h-3zM10.600 5h3v15h-3zM16 0h3v20h-3z" />
          </svg>
          Charts
        </button>
      </div>
      <button type="button" className="flex w-[156px] items-center gap-[9px] border-r border-[#606060] pb-0.5 pl-[15px]">
        <svg width="20" height="20" viewBox="0 0 20 20" fill="#72b5e2">
          <path d="M0 0h9v5H0zM0 7h9v13H0zM11 0h9v12h-9zM11 14h9v6h-9z" />
        </svg>
        Flexible Grid
      </button>
      <button type="button" className="flex w-[172px] items-center gap-[9px] border-r border-[#606060] pb-0.5 pl-[15px]">
        <svg width="20" height="20" viewBox="0 0 20 20" fill="none" stroke="#1a7bb0" strokeWidth="2">
          <rect x="1" y="1" width="18" height="18" />
          <path d="M3 7c3-3 4 0 7 0s4-3 7-1M3 12c3-3 4 0 7 0s4-3 7-1M3 16h14" />
        </svg>
        Product Depth
      </button>
      <div className="flex-1" />
      <button
        type="button"
        aria-label="Layout"
        className="relative flex w-[88px] items-center border-x border-[#606060] pb-0.5 pl-[15px]"
      >
        <svg width="35" height="19" viewBox="0 0 35 19" fill="none" stroke="#b0b0b0" strokeWidth="1.500">
          <path d="M1 1h33v17H1zM17.500 1v17" />
        </svg>
        <Corner />
      </button>
      <div className="w-3" />
    </header>
  );
}

export default function App() {
  return (
    <div className="flex h-screen w-full overflow-hidden bg-[#090909] font-['Open_Sans',sans-serif]">
      <aside className="mr-px flex w-2 shrink-0 flex-col border-r border-black bg-[#333]">
        <div className="flex-[609]" />
        <button
          type="button"
          aria-label="Show sidebar"
          className="flex h-[84px] items-center border-y border-black"
        >
          <svg width="5" height="8" viewBox="0 0 5 8" fill="#777"><path d="M0 0v8l5-4z" /></svg>
        </button>
        <div className="flex-[636]" />
      </aside>
      <div className="flex min-w-0 flex-1 flex-col">
        <TopTabs />
        <main className="flex min-h-0 flex-1">
          <LeftPanel />
          <div className="w-1.5 shrink-0 border-x-2 border-black bg-[#2c2c2c]" />
          <RightPanel />
        </main>
      </div>
    </div>
  );
}
